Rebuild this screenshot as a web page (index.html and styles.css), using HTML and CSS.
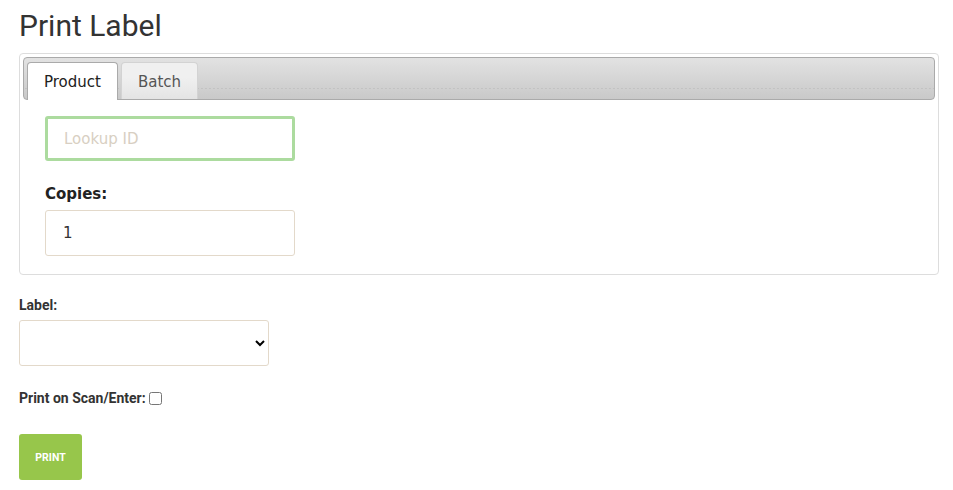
FILE: index.html
```html
<!DOCTYPE html>
<html lang="en">
<head>
  <meta charset="UTF-8" />
  <title>Print Label</title>
  <link rel="stylesheet" href="styles.css">
</head>
<body>
  <div class="page">
    <h1>Print Label</h1>

    <!-- Tabs -->
    <div class="tabs">
      <ul class="tab-nav">
        <li class="tab active">Product</li>
        <li class="tab">Batch</li>
      </ul>
      <div class="tab-panel">
        <input type="text" class="lookup" placeholder="Lookup ID">
        <label class="copies-label" for="copies">Copies:</label>
        <input type="text" id="copies" class="copies" value="1">
      </div>
    </div>

    <!-- Print options -->
    <label class="field-label" for="label">Label:</label>
    <select id="label" class="label-select">
      <option value=""></option>
    </select>

    <div class="scan-row">
      <label for="scan">Print on Scan/Enter:</label>
      <input type="checkbox" id="scan">
    </div>

    <button class="print-btn">PRINT</button>
  </div>
</body>
</html>
```

FILE: styles.css
```css
body {
  margin: 0;
  font-family: Roboto, "Liberation Sans", sans-serif;
  color: #333;
  background: #fff;
}
.page {
  padding: 0 14px 0 19px;
}
h1 {
  margin: 0;
  padding-top: 9px;
  height: 44px;
  font-size: 30px;
  font-weight: 400;
  line-height: 34px;
  color: #333;
}
.tabs {
  border: 1px solid #ddd;
  border-radius: 4px;
  padding: 3px;
  font-family: "DejaVu Sans", Verdana, sans-serif;
}
.tab-nav {
  list-style: none;
  margin: 0;
  padding: 4px 3px 0;
  height: 37px;
  display: flex;
  gap: 3px;
  border: 1px solid #aaa;
  border-radius: 4px;
  background:
    radial-gradient(circle, rgba(170,170,170,0.35) 0.6px, transparent 0.8px) 0 29px / 4px 3px repeat-x,
    linear-gradient(#e2e2e2, #c9c9c9);
}
.tab {
  height: 36px;
  padding: 0 16px;
  font-size: 15px;
  line-height: 38px;
  color: #555;
  border: 1px solid #d3d3d3;
  border-bottom: none;
  border-radius: 4px 4px 0 0;
  background: linear-gradient(#f0f0f0 40%, #e4e4e4);
}
.tab.active {
  height: 37px;
  color: #212121;
  background: #fff;
  border-color: #aaa;
}
.tab-panel {
  padding: 16px 22px 15px;
  display: flex;
  flex-direction: column;
  align-items: flex-start;
}
.lookup {
  box-sizing: border-box;
  width: 250px;
  height: 45px;
  padding: 0 16px;
  border: 3px solid #acdb9f;
  border-radius: 3px;
  font-family: "DejaVu Sans", Verdana, sans-serif;
  font-size: 15px;
  outline: none;
}
.lookup::placeholder {
  color: #d8cfc2;
}
.copies-label {
  margin-top: 23px;
  font-size: 15px;
  font-weight: bold;
  line-height: 20px;
  color: #222;
}
.copies {
  box-sizing: border-box;
  width: 250px;
  height: 46px;
  margin-top: 6px;
  padding: 0 17px;
  border: 1px solid #e3d9ca;
  border-radius: 3px;
  font-family: "DejaVu Sans", Verdana, sans-serif;
  font-size: 15px;
  color: #333;
}
.field-label {
  display: block;
  margin-top: 20px;
  font-size: 14px;
  font-weight: bold;
  line-height: 20px;
}
.label-select {
  display: block;
  box-sizing: border-box;
  width: 250px;
  height: 46px;
  margin-top: 5px;
  border: 1px solid #e3d9ca;
  border-radius: 3px;
  background: #fff;
}
.scan-row {
  display: flex;
  align-items: center;
  margin-top: 23px;
  font-size: 14px;
  font-weight: bold;
  line-height: 18px;
}
.scan-row input {
  margin: 0 0 0 3px;
  width: 13px;
  height: 13px;
}
.print-btn {
  display: block;
  margin-top: 27px;
  width: 63px;
  height: 46px;
  border: none;
  border-radius: 3px;
  background: #97c64b;
  color: #fff;
  font-family: Roboto, "Liberation Sans", sans-serif;
  font-size: 10.5px;
  font-weight: bold;
  padding: 0;
}
```
